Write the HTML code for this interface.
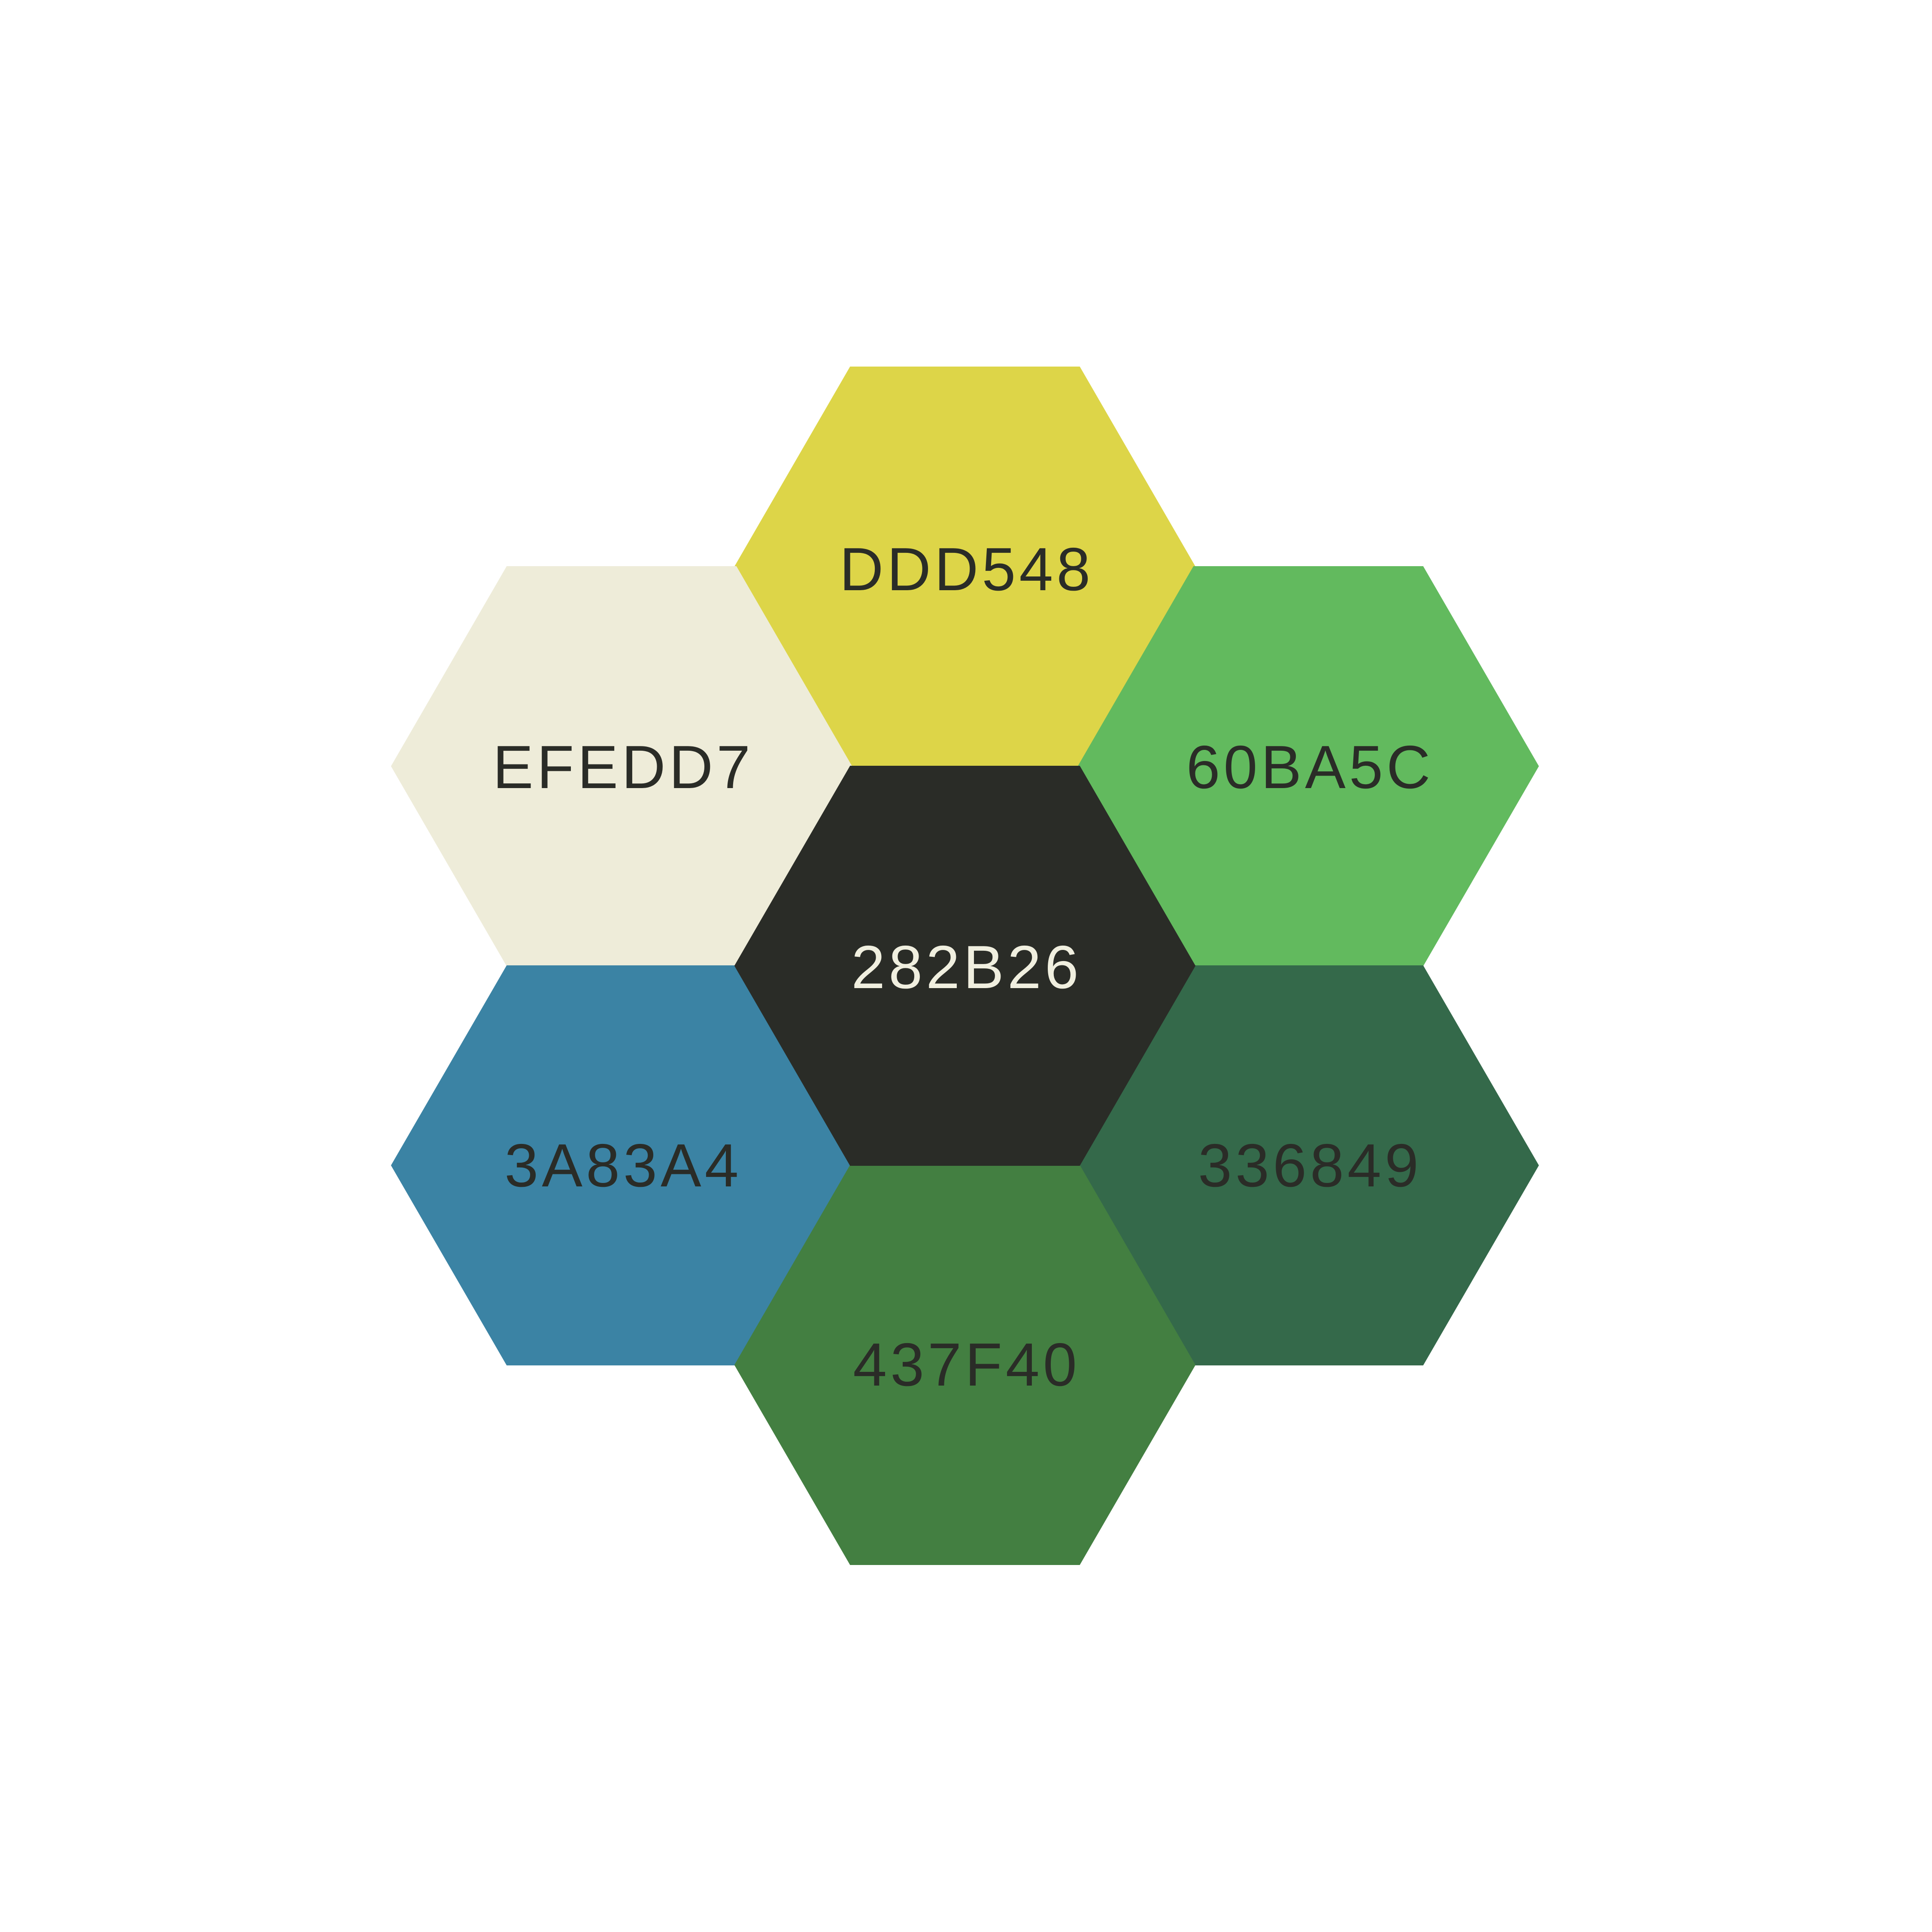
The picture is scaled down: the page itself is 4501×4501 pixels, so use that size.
<!DOCTYPE html>
<html><head><meta charset="utf-8"><style>
html,body{margin:0;padding:0;background:#fff;}
svg{display:block;}
text{font-family:"Liberation Sans",sans-serif;font-size:142px;letter-spacing:8px;text-anchor:middle;}
</style></head><body>
<svg width="4501" height="4501" viewBox="0 0 4501 4501" xmlns="http://www.w3.org/2000/svg">
<defs>
<polygon id="h" points="-267,-465 267,-465 536,0 267,465 -267,465 -536,0"/>
</defs>
<use href="#h" x="2248" y="1320" fill="#DDD548" stroke="#DDD548" stroke-width="2"/>
<use href="#h" x="1448" y="1785" fill="#EEECD9" stroke="#EEECD9" stroke-width="2"/>
<use href="#h" x="3048" y="1785" fill="#62BA5E" stroke="#62BA5E" stroke-width="2"/>
<use href="#h" x="1448" y="2715" fill="#3B83A4" stroke="#3B83A4" stroke-width="2"/>
<use href="#h" x="3048" y="2715" fill="#34694A" stroke="#34694A" stroke-width="2"/>
<use href="#h" x="2248" y="3180" fill="#437F41" stroke="#437F41" stroke-width="2"/>
<use href="#h" x="2248" y="2250" fill="#2A2C27" stroke="#2A2C27" stroke-width="2"/>
<text x="2252" y="1375" fill="#2A2C27">DDD548</text>
<text x="1452" y="1836" fill="#2A2C27">EFEDD7</text>
<text x="3052" y="1836" fill="#2A2C27">60BA5C</text>
<text x="2252" y="2302" fill="#F0EFDF">282B26</text>
<text x="1452" y="2764" fill="#2A2C27">3A83A4</text>
<text x="3052" y="2764" fill="#2A2C27">336849</text>
<text x="2252" y="3228" fill="#2A2C27">437F40</text>
</svg>
</body></html>
